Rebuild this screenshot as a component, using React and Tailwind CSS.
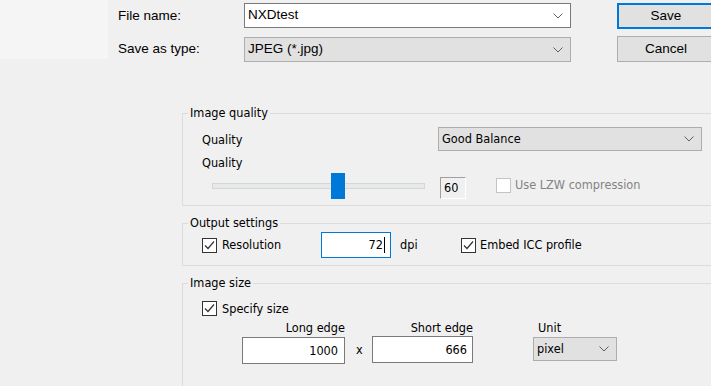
import React from 'react';

const sys = { fontFamily: '"Liberation Sans", Arial, sans-serif' };
const ui = { fontFamily: '"DejaVu Sans Condensed", "DejaVu Sans", sans-serif' };

function Chevron() {
  return (
    <svg width="10" height="6" viewBox="0 0 10 6" className="shrink-0">
      <polyline points="0.5,0.5 5,5 9.5,0.5" fill="none" stroke="#606060" strokeWidth="1" />
    </svg>
  );
}

function Check({ checked = false, disabled = false }) {
  return (
    <div
      className={`w-[15px] h-[15px] shrink-0 bg-white border ${disabled ? 'border-[#c4c4c4]' : 'border-[#333333]'}`}
    >
      {checked && (
        <svg width="13" height="13" viewBox="0 0 13 13">
          <polyline points="2,6.5 5,9.5 11,2.5" fill="none" stroke="#333333" strokeWidth="1.2" />
        </svg>
      )}
    </div>
  );
}

function Combo({ value, className = '' }) {
  return (
    <div
      className={`flex items-center justify-between bg-[#e1e1e1] border border-[#adadad] pl-[3px] pr-[7px] ${className}`}
    >
      <span>{value}</span>
      <Chevron />
    </div>
  );
}

function Group({ title, className = '', children }) {
  return (
    <fieldset className={`ml-[182px] w-[560px] border border-[#dcdcdc] ${className}`}>
      <legend className="ml-[5px] px-[2px] leading-4 text-black">{title}</legend>
      {children}
    </fieldset>
  );
}

export default function App() {
  return (
    <div className="w-[711px] h-[386px] overflow-hidden bg-[#f0f0f0] text-black">
      {/* file name / type */}
      <div className="flex" style={sys}>
        <div className="w-[108px] h-[59px] bg-[#f5f5f5] shrink-0" />
        <div className="ml-[10px] flex flex-col text-[13.5px]">
          <div className="flex mt-[3px] h-[26px]">
            <div className="w-[126px] h-[25px] pt-[1px] flex items-center">File name:</div>
            <div className="w-[327px] h-[25px] flex items-center justify-between bg-white border border-[#7a7a7a] pl-[3px] pr-[7px]">
              <span>NXDtest</span>
              <Chevron />
            </div>
            <div className="ml-[46px] w-[98px] h-[26px] flex items-center justify-center bg-[#e1e1e1] border-2 border-[#0078d7]">
              Save
            </div>
          </div>
          <div className="flex mt-[7px] h-[26px]">
            <div className="w-[126px] h-[25px] mt-[1px] flex items-center">Save as type:</div>
            <Combo value="JPEG (*.jpg)" className="w-[327px] h-[25px] mt-[1px]" />
            <div className="ml-[46px] w-[98px] h-[26px] flex items-center justify-center bg-[#e1e1e1] border border-[#adadad]">
              Cancel
            </div>
          </div>
        </div>
      </div>

      <div className="mt-[43px] text-[12.6px] leading-4" style={ui}>
        {/* Image quality */}
        <Group title="Image quality" className="pb-[6px]">
          <div className="pl-[19px]">
            <div className="flex items-center mt-[6px] h-[24px]">
              <div className="w-[236px] pt-[1px]">Quality</div>
              <Combo value="Good Balance" className="w-[264px] h-[24px]" />
            </div>
            <div className="mt-[4px]">Quality</div>
            <div className="flex items-start mt-[2px] h-[26px]">
              <div className="relative ml-[10px] w-[213px] h-[26px] flex items-center">
                <div className="w-full h-[6px] bg-[#e7eaea] border border-[#d6d6d6]" />
                <div className="absolute left-[119px] top-0 w-[14px] h-[26px] bg-[#0078d7]" />
              </div>
              <div className="ml-[15px] mt-[4px] w-[26px] h-[22px] flex items-center pl-[3px] border-t border-l border-[#a0a0a0] border-r border-b border-r-white border-b-white">
                60
              </div>
              <div className="ml-[30px] mt-[4px] flex items-center">
                <Check disabled />
                <span className="ml-[4px] text-[#838383]">Use LZW compression</span>
              </div>
            </div>
          </div>
        </Group>

        {/* Output settings */}
        <Group title="Output settings" className="mt-[9px] pb-[7px]">
          <div className="pl-[19px] flex items-center mt-[1px] h-[26px]">
            <div className="w-[119px] flex items-center">
              <Check checked />
              <span className="ml-[5px]">Resolution</span>
            </div>
            <div className="w-[70px] h-[26px] bg-white border border-[#0078d7] flex items-center justify-end pr-[5px]">
              <span>72</span>
              <span className="w-px h-[16px] bg-black ml-[1px]" />
            </div>
            <div className="w-[70px] pl-[9px]">dpi</div>
            <Check checked />
            <span className="ml-[4px]">Embed ICC profile</span>
          </div>
        </Group>

        {/* Image size */}
        <Group title="Image size" className="mt-[9px] pb-[40px]">
          <div className="pl-[19px]">
            <div className="flex items-center mt-[10px] h-[15px]">
              <Check checked />
              <span className="ml-[5px]">Specify size</span>
            </div>
            <div className="flex items-start mt-[4px]">
              <div className="ml-[40px] w-[103px] flex flex-col items-end">
                <div>Long edge</div>
                <div className="mt-[1px] w-full h-[27px] bg-white border border-[#7a7a7a] flex items-center justify-end pr-[6px]">
                  1000
                </div>
              </div>
              <div className="w-[27px] pl-[11px] mt-[22px]">x</div>
              <div className="w-[101px] flex flex-col items-end">
                <div>Short edge</div>
                <div className="w-full h-[27px] bg-white border border-[#7a7a7a] flex items-center justify-end pr-[5px]">
                  666
                </div>
              </div>
              <div className="ml-[60px] w-[84px] flex flex-col">
                <div className="pl-[5px]">Unit</div>
                <Combo value="pixel" className="mt-[1px] w-[84px] h-[24px]" />
              </div>
            </div>
          </div>
        </Group>
      </div>
    </div>
  );
}
